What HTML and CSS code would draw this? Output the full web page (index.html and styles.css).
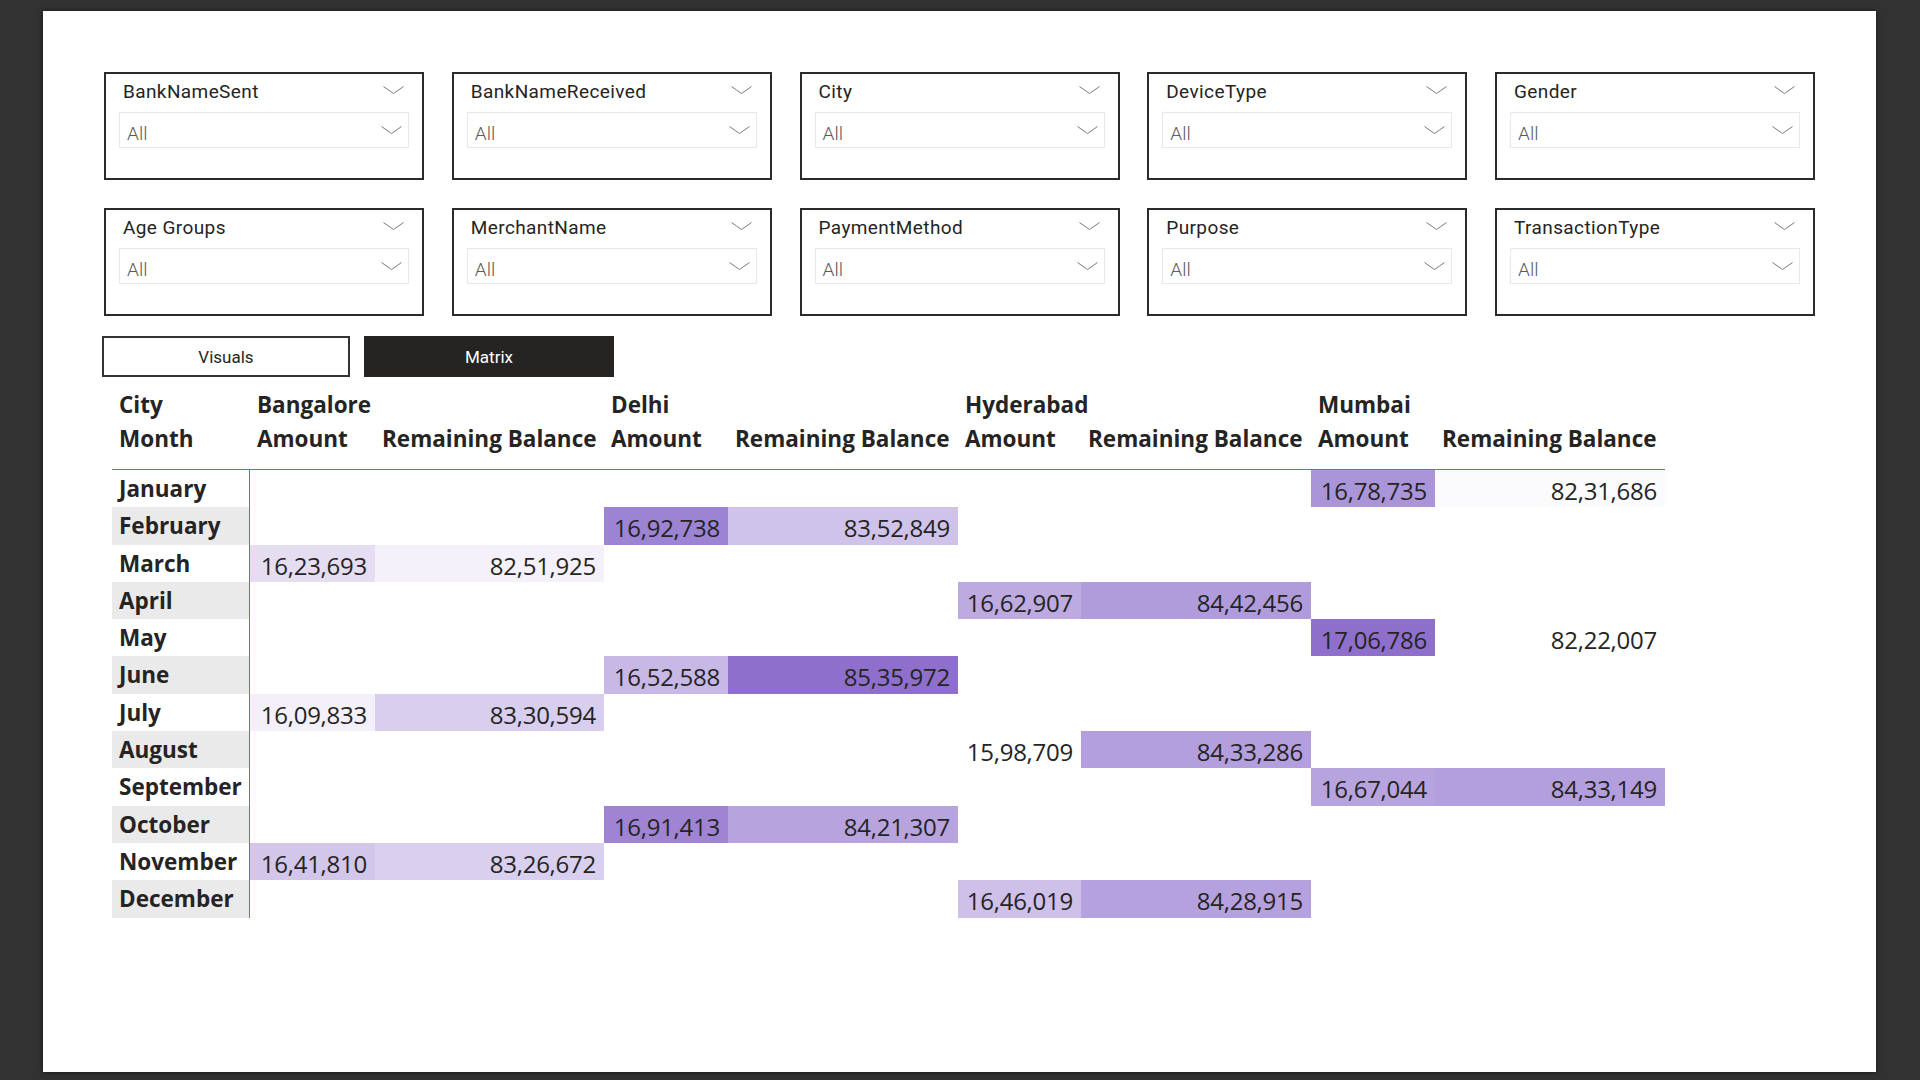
FILE: index.html
```html
<!DOCTYPE html>
<html>
<head>
<meta charset="utf-8">
<title>Matrix</title>
<link rel="stylesheet" href="styles.css">
</head>
<body>
<div class="canvas">
  <div class="slicers">
    <div class="slicer"><div class="sl-head"><span class="sl-title">BankNameSent</span><svg class="chev chev-h" width="21" height="8" viewBox="0 0 21 8"><polyline points="0.5,0.5 10.5,7.5 20.5,0.5"/></svg></div><div class="sl-drop"><span class="sl-val">All</span><svg class="chev" width="21" height="8" viewBox="0 0 21 8"><polyline points="0.5,0.5 10.5,7.5 20.5,0.5"/></svg></div></div>
    <div class="slicer"><div class="sl-head"><span class="sl-title">BankNameReceived</span><svg class="chev chev-h" width="21" height="8" viewBox="0 0 21 8"><polyline points="0.5,0.5 10.5,7.5 20.5,0.5"/></svg></div><div class="sl-drop"><span class="sl-val">All</span><svg class="chev" width="21" height="8" viewBox="0 0 21 8"><polyline points="0.5,0.5 10.5,7.5 20.5,0.5"/></svg></div></div>
    <div class="slicer"><div class="sl-head"><span class="sl-title">City</span><svg class="chev chev-h" width="21" height="8" viewBox="0 0 21 8"><polyline points="0.5,0.5 10.5,7.5 20.5,0.5"/></svg></div><div class="sl-drop"><span class="sl-val">All</span><svg class="chev" width="21" height="8" viewBox="0 0 21 8"><polyline points="0.5,0.5 10.5,7.5 20.5,0.5"/></svg></div></div>
    <div class="slicer"><div class="sl-head"><span class="sl-title">DeviceType</span><svg class="chev chev-h" width="21" height="8" viewBox="0 0 21 8"><polyline points="0.5,0.5 10.5,7.5 20.5,0.5"/></svg></div><div class="sl-drop"><span class="sl-val">All</span><svg class="chev" width="21" height="8" viewBox="0 0 21 8"><polyline points="0.5,0.5 10.5,7.5 20.5,0.5"/></svg></div></div>
    <div class="slicer"><div class="sl-head"><span class="sl-title">Gender</span><svg class="chev chev-h" width="21" height="8" viewBox="0 0 21 8"><polyline points="0.5,0.5 10.5,7.5 20.5,0.5"/></svg></div><div class="sl-drop"><span class="sl-val">All</span><svg class="chev" width="21" height="8" viewBox="0 0 21 8"><polyline points="0.5,0.5 10.5,7.5 20.5,0.5"/></svg></div></div>
    <div class="slicer"><div class="sl-head"><span class="sl-title">Age Groups</span><svg class="chev chev-h" width="21" height="8" viewBox="0 0 21 8"><polyline points="0.5,0.5 10.5,7.5 20.5,0.5"/></svg></div><div class="sl-drop"><span class="sl-val">All</span><svg class="chev" width="21" height="8" viewBox="0 0 21 8"><polyline points="0.5,0.5 10.5,7.5 20.5,0.5"/></svg></div></div>
    <div class="slicer"><div class="sl-head"><span class="sl-title">MerchantName</span><svg class="chev chev-h" width="21" height="8" viewBox="0 0 21 8"><polyline points="0.5,0.5 10.5,7.5 20.5,0.5"/></svg></div><div class="sl-drop"><span class="sl-val">All</span><svg class="chev" width="21" height="8" viewBox="0 0 21 8"><polyline points="0.5,0.5 10.5,7.5 20.5,0.5"/></svg></div></div>
    <div class="slicer"><div class="sl-head"><span class="sl-title">PaymentMethod</span><svg class="chev chev-h" width="21" height="8" viewBox="0 0 21 8"><polyline points="0.5,0.5 10.5,7.5 20.5,0.5"/></svg></div><div class="sl-drop"><span class="sl-val">All</span><svg class="chev" width="21" height="8" viewBox="0 0 21 8"><polyline points="0.5,0.5 10.5,7.5 20.5,0.5"/></svg></div></div>
    <div class="slicer"><div class="sl-head"><span class="sl-title">Purpose</span><svg class="chev chev-h" width="21" height="8" viewBox="0 0 21 8"><polyline points="0.5,0.5 10.5,7.5 20.5,0.5"/></svg></div><div class="sl-drop"><span class="sl-val">All</span><svg class="chev" width="21" height="8" viewBox="0 0 21 8"><polyline points="0.5,0.5 10.5,7.5 20.5,0.5"/></svg></div></div>
    <div class="slicer"><div class="sl-head"><span class="sl-title">TransactionType</span><svg class="chev chev-h" width="21" height="8" viewBox="0 0 21 8"><polyline points="0.5,0.5 10.5,7.5 20.5,0.5"/></svg></div><div class="sl-drop"><span class="sl-val">All</span><svg class="chev" width="21" height="8" viewBox="0 0 21 8"><polyline points="0.5,0.5 10.5,7.5 20.5,0.5"/></svg></div></div>
  </div>

  <div class="tabs">
    <div class="tab tab-visuals">Visuals</div>
    <div class="tab tab-matrix">Matrix</div>
  </div>

  <div class="matrix">
    <div class="mhead">
      <div class="hc">City</div>
      <div class="hc span2">Bangalore</div>
      <div class="hc span2">Delhi</div>
      <div class="hc span2">Hyderabad</div>
      <div class="hc span2">Mumbai</div>
      <div class="hc">Month</div>
      <div class="hc">Amount</div>
      <div class="hc">Remaining Balance</div>
      <div class="hc">Amount</div>
      <div class="hc">Remaining Balance</div>
      <div class="hc">Amount</div>
      <div class="hc">Remaining Balance</div>
      <div class="hc">Amount</div>
      <div class="hc">Remaining Balance</div>
    </div>
    <div class="mbody">
      <div class="rh">January</div>
      <div class="v"></div><div class="v"></div><div class="v"></div><div class="v"></div><div class="v"></div><div class="v"></div>
      <div class="v" style="background:rgb(171,149,217)">16,78,735</div><div class="v" style="background:rgb(251,250,253)">82,31,686</div>

      <div class="rh alt">February</div>
      <div class="v"></div><div class="v"></div>
      <div class="v" style="background:rgb(157,131,211)">16,92,738</div><div class="v" style="background:rgb(208,195,234)">83,52,849</div>
      <div class="v"></div><div class="v"></div><div class="v"></div><div class="v"></div>

      <div class="rh">March</div>
      <div class="v" style="background:rgb(229,222,243)">16,23,693</div><div class="v" style="background:rgb(244,241,250)">82,51,925</div>
      <div class="v"></div><div class="v"></div><div class="v"></div><div class="v"></div><div class="v"></div><div class="v"></div>

      <div class="rh alt">April</div>
      <div class="v"></div><div class="v"></div><div class="v"></div><div class="v"></div>
      <div class="v" style="background:rgb(188,170,225)">16,62,907</div><div class="v" style="background:rgb(176,155,219)">84,42,456</div>
      <div class="v"></div><div class="v"></div>

      <div class="rh">May</div>
      <div class="v"></div><div class="v"></div><div class="v"></div><div class="v"></div><div class="v"></div><div class="v"></div>
      <div class="v" style="background:rgb(142,112,204)">17,06,786</div><div class="v">82,22,007</div>

      <div class="rh alt">June</div>
      <div class="v"></div><div class="v"></div>
      <div class="v" style="background:rgb(199,184,230)">16,52,588</div><div class="v" style="background:rgb(142,112,204)">85,35,972</div>
      <div class="v"></div><div class="v"></div><div class="v"></div><div class="v"></div>

      <div class="rh">July</div>
      <div class="v" style="background:rgb(243,240,250)">16,09,833</div><div class="v" style="background:rgb(216,206,237)">83,30,594</div>
      <div class="v"></div><div class="v"></div><div class="v"></div><div class="v"></div><div class="v"></div><div class="v"></div>

      <div class="rh alt">August</div>
      <div class="v"></div><div class="v"></div><div class="v"></div><div class="v"></div>
      <div class="v">15,98,709</div><div class="v" style="background:rgb(179,159,221)">84,33,286</div>
      <div class="v"></div><div class="v"></div>

      <div class="rh">September</div>
      <div class="v"></div><div class="v"></div><div class="v"></div><div class="v"></div><div class="v"></div><div class="v"></div>
      <div class="v" style="background:rgb(183,164,223)">16,67,044</div><div class="v" style="background:rgb(179,159,221)">84,33,149</div>

      <div class="rh alt">October</div>
      <div class="v"></div><div class="v"></div>
      <div class="v" style="background:rgb(158,132,211)">16,91,413</div><div class="v" style="background:rgb(183,164,223)">84,21,307</div>
      <div class="v"></div><div class="v"></div><div class="v"></div><div class="v"></div>

      <div class="rh">November</div>
      <div class="v" style="background:rgb(210,198,235)">16,41,810</div><div class="v" style="background:rgb(217,207,238)">83,26,672</div>
      <div class="v"></div><div class="v"></div><div class="v"></div><div class="v"></div><div class="v"></div><div class="v"></div>

      <div class="rh alt">December</div>
      <div class="v"></div><div class="v"></div><div class="v"></div><div class="v"></div>
      <div class="v" style="background:rgb(206,192,233)">16,46,019</div><div class="v" style="background:rgb(181,161,221)">84,28,915</div>
      <div class="v"></div><div class="v"></div>
    </div>
  </div>
</div>
</body>
</html>
```
FILE: styles.css
```css
html, body {
  margin: 0;
  padding: 0;
}
body {
  background: #323232;
  font-family: "Open Sans", "Noto Sans", sans-serif;
  color: #252423;
  width: 1920px;
  height: 1080px;
  overflow: hidden;
}
.canvas {
  margin: 11px 0 0 43px;
  width: 1833px;
  height: 1061px;
  box-sizing: border-box;
  padding: 61px 0 0 61px;
  background: #ffffff;
  box-shadow: 0 0 5px rgba(0, 0, 0, 0.6);
}

/* Slicers */
.slicers {
  display: grid;
  grid-template-columns: repeat(5, 320px);
  column-gap: 27.75px;
  row-gap: 28px;
}
.slicer {
  height: 108px;
  box-sizing: border-box;
  border: 2px solid #2b2b2b;
  background: #fff;
  font-family: Roboto, "Noto Sans", sans-serif;
}
.sl-head {
  height: 38px;
  box-sizing: border-box;
  padding: 7px 18px 0 17px;
  display: flex;
  justify-content: space-between;
  align-items: flex-start;
}
.sl-title {
  font-size: 19px;
  line-height: 22px;
  letter-spacing: 0.4px;
  color: #252423;
}
.chev {
  display: block;
  flex: none;
}
.chev polyline {
  fill: none;
  stroke: #7a7a7a;
  stroke-width: 1;
}
.chev-h {
  margin-top: 4.5px;
}
.sl-drop {
  margin: 0 13px;
  height: 36px;
  box-sizing: border-box;
  border: 1px solid #e8e8e8;
  padding: 0 6px 0 7px;
  display: flex;
  justify-content: space-between;
  align-items: center;
}
.sl-val {
  font-size: 19px;
  font-weight: 300;
  line-height: 26px;
  padding-top: 7px;
  color: #5a5a5a;
}

/* Tabs */
.tabs {
  display: flex;
  gap: 14px;
  margin: 20px 0 0 -2px;
}
.tab {
  height: 41px;
  box-sizing: border-box;
  display: flex;
  align-items: center;
  justify-content: center;
  font-family: Roboto, "Noto Sans", sans-serif;
  font-size: 17px;
}
.tab-visuals {
  width: 248px;
  border: 2px solid #333;
  background: #fff;
  color: #252423;
}
.tab-matrix {
  width: 250px;
  background: #252423;
  color: #ffffff;
}

/* Matrix */
.matrix {
  margin: 11px 0 0 8px;
  width: 1553px;
}
.mhead,
.mbody {
  display: grid;
  grid-template-columns: 138px 125px 229px 124px 230px 123px 230px 124px 230px;
}
.mhead {
  grid-template-rows: 34px 34px;
  padding-bottom: 13px;
  border-bottom: 1px solid #1a8cff;
}
.hc {
  font-weight: 700;
  font-size: 22.5px;
  line-height: 34px;
  padding-left: 7px;
  white-space: nowrap;
  color: #252423;
}
.span2 {
  grid-column: span 2;
}
.mbody {
  grid-auto-rows: 37.3px;
}
.rh {
  font-weight: 700;
  font-size: 22.5px;
  line-height: 36.3px;
  padding: 1px 0 0 7px;
  border-right: 1px solid #1a8cff;
  white-space: nowrap;
  color: #252423;
}
.rh.alt {
  background: #eaeaea;
}
.v {
  font-size: 24px;
  line-height: 33.3px;
  padding: 4px 8px 0 0;
  text-align: right;
  letter-spacing: -0.25px;
  color: #252423;
  white-space: nowrap;
}
```
